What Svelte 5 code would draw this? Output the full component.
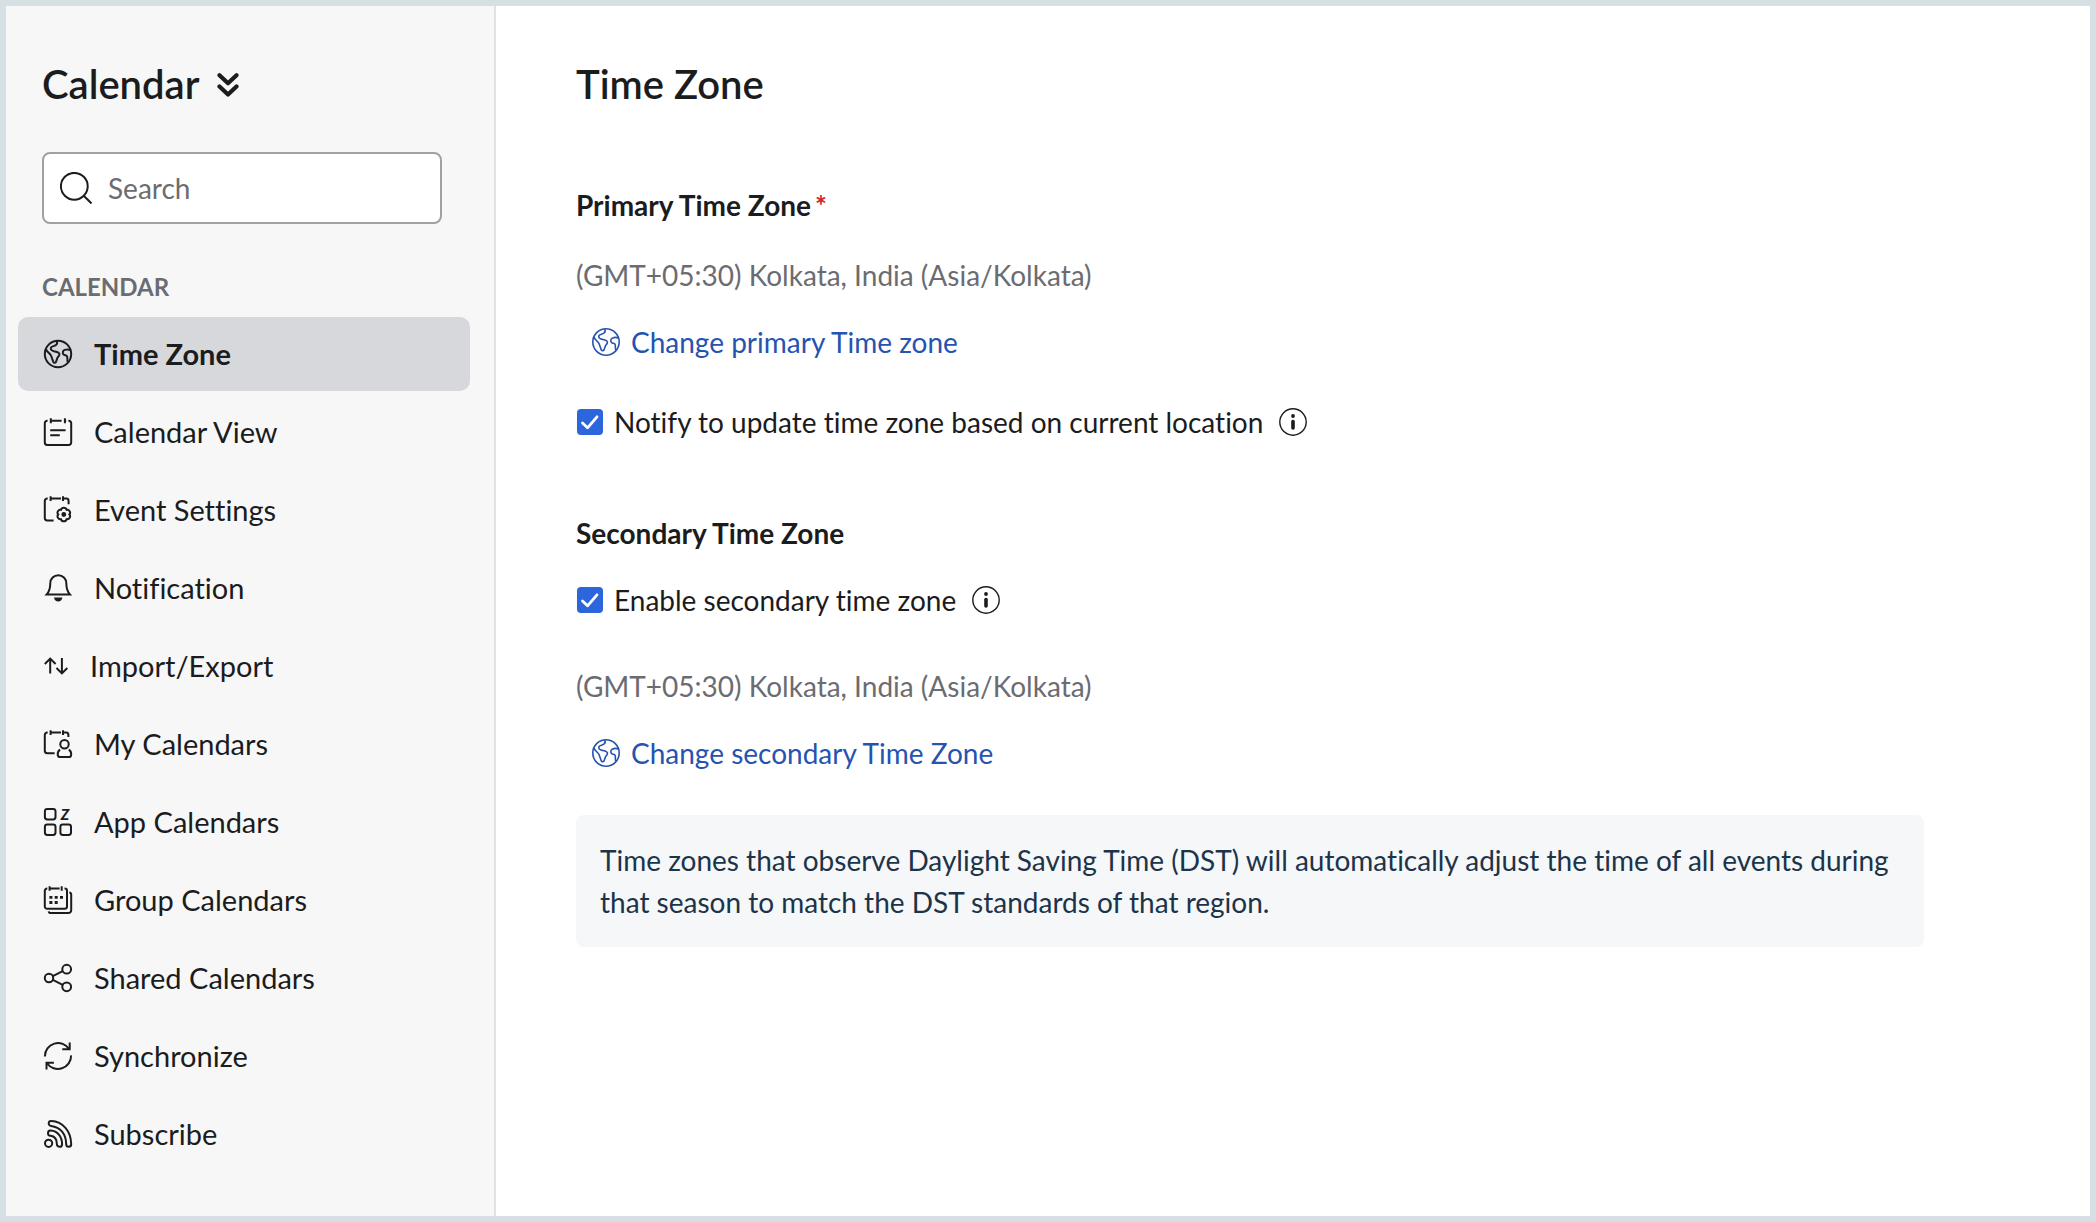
<script lang="ts">
  const icons: Record<string, string> = {
    globe: `<circle cx="14" cy="14" r="13.200"/>
      <path d="M12.600 1c.9 1.700.6 3.200-.8 4.200C10 6.400 7.200 6.200 6.800 8c-.4 1.900 1.500 2.900 3.700 3.400 2.500.6 5.600 1.200 4.900 3.400-.4 1.400-1.700 2.200-2.200 3.600l-1.200 3.500c-.5 1.200-2.200 1.200-2.700 0L7.200 16C6.400 13.600 3.500 12.500 1.900 9.200"/>
      <path d="M26.600 10c-2-.7-4-.8-5.900-.1-2 .8-2.600 3.400-1 4.700 1 .9 2.600.3 3.300 1.600.8 1.500-.1 4 .9 6.400"/>`,
    view: `<path d="M3.600 2.800h-.3A2.400 2.400 0 0 0 .8 5.200v19.400a2.400 2.400 0 0 0 2.400 2.400h21.600a2.400 2.400 0 0 0 2.400-2.400V5.200a2.400 2.400 0 0 0-2.400-2.400h-.4M7 2.800h10.600M20.600 2.800h1.600M6.800.2v5M20.900.2v5M6.200 12.300h15.400M6.200 17.300h9.600"/>`,
    settings: `<path d="M3.700 2.600h-.5A2.400 2.400 0 0 0 .8 5v17a2.400 2.400 0 0 0 2.400 2.400h6.400M6.800 2.600h10.200M6.600.2v4.800M19 .2v4.800M19 2.600h3.200A2.400 2.400 0 0 1 24.600 5v3.300"/>
      <path d="M25.400 18.500a2.900 2.900 0 0 1-2.800 4.700 2.900 2.900 0 0 1-5.600 0 2.900 2.900 0 0 1-2.800-4.700 2.900 2.900 0 0 1 2.800-4.700 2.900 2.900 0 0 1 5.600 0 2.900 2.900 0 0 1 2.800 4.700z"/>
      <circle cx="19.800" cy="18.500" r="2.400" fill="currentColor" stroke="none"/>`,
    bell: `<path d="M2.700 20.400C5.600 17.300 6.200 14.700 6.300 9.200a8 8 0 0 1 16 0c.1 5.500.7 8.100 3.600 11.200z"/>
      <path d="M10 23.400h8.400c-.4 2.700-2 4.100-4.200 4.100s-3.800-1.400-4.200-4.100z" fill="currentColor" stroke="none"/>`,
    arrows: `<path d="M6.200 21.600V6.800M.8 12l5.400-5.400 5.400 5.400M17.900 6v15M12.500 16l5.400 5.400 5.400-5.400"/>`,
    user: `<path d="M3.700 2.600h-.5A2.400 2.400 0 0 0 .8 5v15.800a2.400 2.400 0 0 0 2.400 2.400h7.400M6.800 2.600h10.200M6.600.2v4.800M19 .2v4.800M19 2.600h3A2.400 2.400 0 0 1 24.400 5v2"/>
      <circle cx="20.500" cy="14.200" r="4.200"/>
      <path d="M16.200 19.800c-1.800.6-2.500 2.200-2.500 4.600 0 1.600.9 2.600 2.600 2.600h8.400c1.700 0 2.500-1 2.500-2.600 0-2.400-.7-4-2.500-4.600"/>`,
    apps: `<rect x=".9" y=".9" width="10.600" height="10.600" rx="2.400"/>
      <rect x=".9" y="16.400" width="10.600" height="10.600" rx="2.400"/>
      <rect x="16.400" y="16.400" width="10.600" height="10.600" rx="2.400"/>
      <text x="16.800" y="11.700" font-size="15" font-weight="900" font-style="italic" fill="currentColor" stroke="none">Z</text>`,
    group: `<path d="M3.300 2.500h-.2A2.300 2.300 0 0 0 .8 4.800v15.700a2.300 2.300 0 0 0 2.300 2.300h17.600a2.300 2.300 0 0 0 2.300-2.300V4.800a2.300 2.300 0 0 0-2.300-2.300h-.2M6 2.500h9.600M5.600.2v4.600M17.700.2v4.600M25.300 6.400c1.300.1 1.900.9 1.900 2.100v15.800a2.800 2.800 0 0 1-2.800 2.800H7c-1.300 0-2.100-.6-2.300-1.800"/>
      <path d="M5.400 11.400h3M10.700 11.400h3M16 11.400h3M5.400 16.500h3M10.700 16.500h3" stroke-width="2.800"/>`,
    share: `<circle cx="5" cy="14" r="4.200"/><circle cx="22.700" cy="5.200" r="4.400"/><circle cx="22.700" cy="22.800" r="4.400"/><path d="M8.800 12.100l9.900-4.900M8.800 15.900l9.900 4.900"/>`,
    sync: `<path d="M.9 14.400A13.200 13.200 0 0 1 25.200 7.100M25.700.6v6.700h-7.400M27.100 13.400A13.200 13.200 0 0 1 3 21.200M2.500 27.600v-6.900h7.400"/>`,
    feed: `<circle cx="4.600" cy="23.300" r="3.600"/>
      <path d="M7.300.9C18.800 1.400 27 11 27.200 24.200a2.500 2.500 0 0 1-5 0C22 14 16.500 7 7.100 5.900A2.500 2.500 0 0 1 7.300.9z"/>
      <path d="M6.700 10.600c6.700.4 11.300 5.700 11.400 13.600a2.600 2.600 0 0 1-5.200 0c0-4.900-2.400-8-6.400-8.400a2.600 2.600 0 0 1 .2-5.200z"/>`,
  };

  const items = [
    { label: 'Time Zone', icon: 'globe' },
    { label: 'Calendar View', icon: 'view' },
    { label: 'Event Settings', icon: 'settings' },
    { label: 'Notification', icon: 'bell' },
    { label: 'Import/Export', icon: 'arrows', width: 24 },
    { label: 'My Calendars', icon: 'user' },
    { label: 'App Calendars', icon: 'apps' },
    { label: 'Group Calendars', icon: 'group' },
    { label: 'Shared Calendars', icon: 'share' },
    { label: 'Synchronize', icon: 'sync' },
    { label: 'Subscribe', icon: 'feed' },
  ];

  let active = $state('Time Zone');
  let search = $state('');
  let notify = $state(true);
  let secondary = $state(true);
</script>

{#snippet icon(name: string, width = 28)}
  <svg class="icon" {width} height="28" viewBox="0 0 {width} 28" aria-hidden="true">
    {@html icons[name]}
  </svg>
{/snippet}

{#snippet info()}
  <button class="info" aria-label="More information">
    <svg width="28" height="28" viewBox="0 0 28 28" aria-hidden="true">
      <circle cx="14" cy="14" r="13.200" fill="none" stroke="currentColor" stroke-width="1.400" />
      <circle cx="14" cy="8" r="1.900" fill="currentColor" />
      <path d="M14 13.500v6.500" stroke="currentColor" stroke-width="3.600" stroke-linecap="round" />
    </svg>
  </button>
{/snippet}

<div class="page">
  <aside class="sidebar">
    <button class="switcher">
      Calendar
      <svg width="22" height="26" viewBox="0 0 22 26" aria-hidden="true">
        <path d="M2.500 4.200l8.500 8 8.500-8M2.500 15.500l8.500 8 8.500-8" />
      </svg>
    </button>

    <label class="search">
      <svg width="32" height="32" viewBox="0 0 32 32" aria-hidden="true">
        <circle cx="14.300" cy="14.300" r="13.400" />
        <path d="M24 24l7.500 7.500" />
      </svg>
      <input type="text" placeholder="Search" aria-label="Search" bind:value={search} />
    </label>

    <h2 class="group-title">CALENDAR</h2>
    <nav>
      {#each items as item}
        <a
          href="#settings"
          class:active={active === item.label}
          onclick={() => (active = item.label)}
        >
          {@render icon(item.icon, item.width)}
          <span>{item.label}</span>
        </a>
      {/each}
    </nav>
  </aside>

  <main>
    <h1>Time Zone</h1>

    <section>
      <h3>Primary Time Zone<span class="required">*</span></h3>
      <p class="zone">(GMT+05:30) Kolkata, India (Asia/Kolkata)</p>
      <a class="change" href="#primary">{@render icon('globe')}Change primary Time zone</a>
      <div class="option">
        <input id="notify" type="checkbox" bind:checked={notify} />
        <label for="notify">Notify to update time zone based on current location</label>
        {@render info()}
      </div>
    </section>

    <section>
      <h3>Secondary Time Zone</h3>
      <div class="option enable">
        <input id="secondary" type="checkbox" bind:checked={secondary} />
        <label for="secondary">Enable secondary time zone</label>
        {@render info()}
      </div>
      <p class="zone">(GMT+05:30) Kolkata, India (Asia/Kolkata)</p>
      <a class="change" href="#secondary">{@render icon('globe')}Change secondary Time Zone</a>
    </section>

    <p class="note">
      Time zones that observe Daylight Saving Time (DST) will automatically adjust the time of all
      events during that season to match the DST standards of that region.
    </p>
  </main>
</div>

<style>
  :global(body) {
    margin: 0;
    background: #fff;
  }

  .page {
    box-sizing: border-box;
    display: flex;
    min-height: 100vh;
    border: 6px solid #d6dfe3;
    font-family: Lato, "Open Sans", sans-serif;
    font-size: 28px;
    line-height: 42px;
    font-variant-ligatures: none;
    color: #1b1c1e;
  }

  h1, h2, h3, p { margin: 0; }

  button {
    padding: 0;
    border: 0;
    background: none;
    font: inherit;
    color: inherit;
    cursor: pointer;
  }

  a { text-decoration: none; }

  .icon {
    flex: none;
    overflow: visible;
    fill: none;
    stroke: currentColor;
    stroke-width: 2;
  }

  .sidebar {
    box-sizing: border-box;
    flex: none;
    width: 490px;
    padding: 54px 24px 24px 12px;
    border-right: 2px solid #e1e1e3;
    background: #f7f7f7;
  }

  .switcher {
    display: flex;
    align-items: center;
    gap: 18px;
    margin-left: 24px;
    font-size: 40px;
    font-weight: 600;
    line-height: 48px;
  }
  .switcher svg {
    fill: none;
    stroke: currentColor;
    stroke-width: 4.2;
    stroke-linecap: round;
    stroke-linejoin: round;
  }

  .search {
    box-sizing: border-box;
    display: flex;
    align-items: center;
    gap: 16px;
    height: 72px;
    margin: 44px 28px 48px 24px;
    padding: 0 16px;
    border: 2px solid #a0a1a5;
    border-radius: 8px;
    background: #fff;
  }
  .search svg {
    flex: none;
    fill: none;
    stroke: #1b1c1e;
    stroke-width: 2;
  }
  .search input {
    flex: 1;
    min-width: 0;
    padding: 0;
    border: 0;
    outline: 0;
    background: none;
    font: inherit;
    color: inherit;
  }
  .search input::placeholder { color: #6b6c71; opacity: 1; }

  .group-title {
    margin: 0 0 15px 24px;
    font-size: 24px;
    font-weight: 700;
    line-height: 30px;
    color: #6b6c71;
  }

  nav {
    display: flex;
    flex-direction: column;
    gap: 4px;
    font-size: 29px;
  }
  nav a {
    display: flex;
    align-items: center;
    gap: 22px;
    padding: 16px 26px;
    border-radius: 10px;
    color: inherit;
  }
  nav a.active {
    background: #d7d8dc;
    font-weight: 700;
  }

  main {
    flex: 1;
    min-width: 0;
    padding: 54px 166px 54px 80px;
  }

  h1 {
    margin-bottom: 76px;
    font-size: 40px;
    font-weight: 600;
    line-height: 48px;
  }

  section + section { margin-top: 69px; }

  h3 {
    font-size: 28px;
    font-weight: 700;
    line-height: 42px;
  }
  .required {
    margin-left: 4px;
    color: #d61f1f;
  }

  .zone {
    margin-top: 28px;
    color: #6b6c71;
  }

  .change {
    display: flex;
    align-items: center;
    gap: 11px;
    width: fit-content;
    margin: 25px 0 0 16px;
    color: #2653b0;
  }
  .change .icon,
  .change :global(.icon) { stroke-width: 1.6; }

  .option {
    display: flex;
    align-items: center;
    margin-top: 38px;
  }
  .option.enable { margin-top: 25px; }
  .enable + .zone { margin-top: 44px; }

  .option input {
    appearance: none;
    width: 26px;
    height: 26px;
    margin: 0 11px 0 1px;
    border: 2px solid #a0a1a5;
    border-radius: 4px;
  }
  .option input:checked {
    border: 0;
    background: #2b66dd url("data:image/svg+xml,%3Csvg xmlns='http://www.w3.org/2000/svg' viewBox='0 0 26 26'%3E%3Cpath d='M5.500 14l5 4.800L20 7.800' fill='none' stroke='white' stroke-width='2.800' stroke-linecap='round' stroke-linejoin='round'/%3E%3C/svg%3E");
  }

  .info {
    display: flex;
    margin-left: 16px;
  }

  .note {
    margin-top: 41px;
    padding: 24px;
    border-radius: 8px;
    background: #f5f7f9;
    color: #1c3449;
  }
</style>
